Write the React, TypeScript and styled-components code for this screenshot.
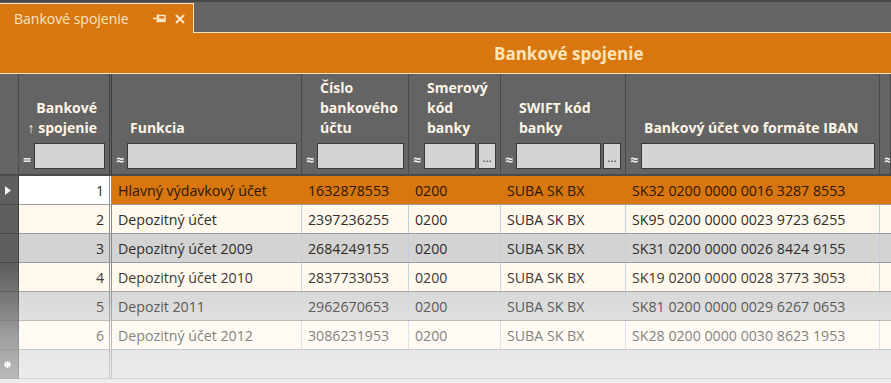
import React from "react";
import styled, { createGlobalStyle } from "styled-components";

const ORANGE = "#D8760F";
const CREAM = "#FBE6C4";
const COLS = "19px 93px 190px 107px 92px 125px 254px 1fr";

const GlobalStyle = createGlobalStyle`
  html, body { margin: 0; padding: 0; background: #656565; }
  body { font-family: "Open Sans", "Noto Sans", sans-serif; }
  * { box-sizing: border-box; }
`;

const Frame = styled.div`
  width: 891px;
  height: 383px;
  overflow: hidden;
  background: #656565;
  display: flex;
  flex-direction: column;
`;

const TabStrip = styled.div`
  height: 33px;
  flex: none;
  border-top: 2px solid #474747;
  border-bottom: 1px solid ${CREAM};
  display: flex;
  align-items: flex-end;
`;

const Tab = styled.div`
  width: 194px;
  height: 30px;
  margin-bottom: -1px;
  background: ${ORANGE};
  border-top: 1px solid ${CREAM};
  border-right: 1px solid ${CREAM};
  display: flex;
  align-items: center;
  padding: 0 8px 0 14px;
  color: ${CREAM};
  font-size: 14px;
`;

const TabTitle = styled.span`
  flex: 1;
  white-space: nowrap;
`;

const TabIcons = styled.span`
  display: flex;
  align-items: center;
  gap: 9px;
`;

const TitleBand = styled.div`
  height: 41px;
  flex: none;
  background: ${ORANGE};
  border-bottom: 1px solid ${CREAM};
  display: flex;
  align-items: center;
  padding-left: 494px;
  color: #FFE4B8;
  font-size: 17px;
  font-weight: 700;
  white-space: nowrap;
`;

const HeaderRow = styled.div`
  display: grid;
  grid-template-columns: ${COLS};
  height: 102px;
  flex: none;
  background: #646464;
  border-bottom: 2px solid #4a4a4a;
`;

const HeaderCell = styled.div<{ $double?: boolean }>`
  display: flex;
  flex-direction: column;
  overflow: hidden;
  border-right: ${(p) => (p.$double ? "3px double #3e3e3e" : "1px solid #4a4a4a")};
`;

const HeaderLabel = styled.div<{ $right?: boolean }>`
  flex: 1;
  display: flex;
  flex-direction: column;
  justify-content: flex-end;
  align-items: ${(p) => (p.$right ? "flex-end" : "flex-start")};
  text-align: ${(p) => (p.$right ? "right" : "left")};
  padding: 4px ${(p) => (p.$right ? "12px" : "4px")} 5px ${(p) => (p.$right ? "4px" : "18px")};
  color: #FFF4E4;
  font-size: 14px;
  font-weight: 700;
  line-height: 20px;
  white-space: nowrap;
`;

const FilterRow = styled.div`
  height: 26px;
  margin-bottom: 5px;
  display: flex;
  align-items: center;
  gap: 2px;
  padding: 0 4px 0 4px;
  flex: none;
`;

const FilterSymbol = styled.span`
  width: 9px;
  flex: none;
  color: #EDEDED;
  font-size: 14px;
  font-weight: 700;
  line-height: 1;
  padding-top: 7px;
`;

const FilterInput = styled.div`
  flex: 1;
  min-width: 20px;
  height: 26px;
  background: #D4D4D4;
  border: 1px solid #3a3a3a;
`;

const DotsButton = styled.div`
  width: 18px;
  height: 26px;
  flex: none;
  margin-left: 0px;
  background: #D4D4D4;
  border: 1px solid #3a3a3a;
  color: #444;
  font-size: 12px;
  display: flex;
  align-items: flex-end;
  justify-content: center;
  padding-bottom: 4px;
  line-height: 1;
`;

const Body = styled.div`
  position: relative;
  flex: 1;
  background: #d6d6d6;
`;

const Fade = styled.div`
  position: absolute;
  inset: 0;
  pointer-events: none;
  background: linear-gradient(
    to bottom,
    rgba(255, 255, 255, 0) 0px,
    rgba(255, 255, 255, 0) 89px,
    rgba(255, 255, 255, 0.2) 130px,
    rgba(255, 255, 255, 0.4) 160px,
    rgba(255, 255, 255, 0.58) 207px
  );
`;

const Row = styled.div<{ $bg: string }>`
  display: grid;
  grid-template-columns: ${COLS};
  height: 29px;
  background: ${(p) => p.$bg};
  border-bottom: 1px solid #9c9c9c;
`;

const RowHead = styled.div`
  background: #5f5f5f;
  border-right: 1px solid #404040;
  border-bottom: 1px solid #4a4a4a;
  margin-bottom: -1px;
  display: flex;
  align-items: center;
  justify-content: center;
  padding-right: 3px;
`;

const Cell = styled.div<{ $right?: boolean; $double?: boolean; $sel?: boolean; $bg?: string }>`
  display: flex;
  align-items: center;
  justify-content: ${(p) => (p.$right ? "flex-end" : "flex-start")};
  padding: 0 ${(p) => (p.$right ? "5px" : "6px")};
  overflow: hidden;
  white-space: nowrap;
  font-size: 14.2px;
  color: ${(p) => (p.$sel ? "#2a1604" : "#2e2e2e")};
  background: ${(p) => p.$bg || "transparent"};
  border-right: ${(p) =>
    p.$double ? "3px double #8a8a8a" : p.$sel ? `1px solid ${ORANGE}` : "1px solid #c6d0dc"};
`;

const PinIcon = () => (
  <svg width="13" height="9" viewBox="0 0 13 9">
    <line x1="0" y1="4.5" x2="4" y2="4.5" stroke={CREAM} strokeWidth="1.6" />
    <line x1="4.5" y1="0.5" x2="4.5" y2="8.5" stroke={CREAM} strokeWidth="1.6" />
    <rect x="5.5" y="1.5" width="6.5" height="6" fill="none" stroke={CREAM} strokeWidth="1.4" />
    <rect x="5.5" y="4.5" width="6.5" height="3" fill={CREAM} />
  </svg>
);

const CloseIcon = () => (
  <svg width="10" height="10" viewBox="0 0 10 10">
    <path d="M1 1 L9 9 M9 1 L1 9" stroke={CREAM} strokeWidth="2.2" />
  </svg>
);

const CurrentMarker = () => (
  <svg width="6" height="9" viewBox="0 0 6 9">
    <polygon points="0,0 6,4.5 0,9" fill="#f4f4f4" />
  </svg>
);

const NewRowMarker = () => (
  <svg width="7" height="7" viewBox="0 0 7 7">
    <path d="M3.5 0 V7 M0 3.5 H7 M1 1 L6 6 M6 1 L1 6" stroke="#fff" strokeWidth="1.3" />
  </svg>
);

type Col = { label: React.ReactNode; right?: boolean; double?: boolean; sym?: string; dots?: boolean };

const columns: Col[] = [
  {
    label: (
      <>
        <span>Bankové</span>
        <span>↑ spojenie</span>
      </>
    ),
    right: true,
    double: true,
    sym: "=",
  },
  { label: "Funkcia", sym: "≈" },
  {
    label: (
      <>
        <span>Číslo</span>
        <span>bankového</span>
        <span>účtu</span>
      </>
    ),
    sym: "≈",
  },
  {
    label: (
      <>
        <span>Smerový</span>
        <span>kód</span>
        <span>banky</span>
      </>
    ),
    sym: "≈",
    dots: true,
  },
  {
    label: (
      <>
        <span>SWIFT kód</span>
        <span>banky</span>
      </>
    ),
    sym: "≈",
    dots: true,
  },
  { label: "Bankový účet vo formáte IBAN", sym: "≈" },
  { label: "", sym: "≈" },
];

const data = [
  ["1", "Hlavný výdavkový účet", "1632878553", "0200", "SUBA SK BX", "SK32 0200 0000 0016 3287 8553"],
  ["2", "Depozitný účet", "2397236255", "0200", "SUBA SK BX", "SK95 0200 0000 0023 9723 6255"],
  ["3", "Depozitný účet 2009", "2684249155", "0200", "SUBA SK BX", "SK31 0200 0000 0026 8424 9155"],
  ["4", "Depozitný účet 2010", "2837733053", "0200", "SUBA SK BX", "SK19 0200 0000 0028 3773 3053"],
  ["5", "Depozit 2011", "2962670653", "0200", "SUBA SK BX", "SK81 0200 0000 0029 6267 0653"],
  ["6", "Depozitný účet 2012", "3086231953", "0200", "SUBA SK BX", "SK28 0200 0000 0030 8623 1953"],
];

const CREAM_ROW = "#FFF8EC";
const GREY_ROW = "#D3D3D3";

export default function App() {
  return (
    <>
      <GlobalStyle />
      <Frame>
        <TabStrip>
          <Tab>
            <TabTitle>Bankové spojenie</TabTitle>
            <TabIcons>
              <PinIcon />
              <CloseIcon />
            </TabIcons>
          </Tab>
        </TabStrip>
        <TitleBand>Bankové spojenie</TitleBand>
        <HeaderRow>
          <HeaderCell />
          {columns.map((c, i) => (
            <HeaderCell key={i} $double={c.double}>
              <HeaderLabel $right={c.right}>{c.label}</HeaderLabel>
              <FilterRow>
                <FilterSymbol>{c.sym}</FilterSymbol>
                <FilterInput />
                {c.dots && <DotsButton>...</DotsButton>}
              </FilterRow>
            </HeaderCell>
          ))}
        </HeaderRow>
        <Body>
          {data.map((r, i) => {
            const sel = i === 0;
            const bg = sel ? ORANGE : i % 2 === 1 ? CREAM_ROW : GREY_ROW;
            return (
              <Row key={i} $bg={bg}>
                <RowHead>{sel && <CurrentMarker />}</RowHead>
                <Cell $right $double $bg={sel ? "#ffffff" : undefined}>
                  {r[0]}
                </Cell>
                <Cell $sel={sel}>{r[1]}</Cell>
                <Cell $sel={sel}>{r[2]}</Cell>
                <Cell $sel={sel}>{r[3]}</Cell>
                <Cell $sel={sel}>{r[4]}</Cell>
                <Cell $sel={sel}>{r[5]}</Cell>
                <Cell $sel={sel} />
              </Row>
            );
          })}
          <Row $bg={GREY_ROW}>
            <RowHead>
              <NewRowMarker />
            </RowHead>
            <Cell $double />
            <Cell />
            <Cell />
            <Cell />
            <Cell />
            <Cell />
            <Cell />
          </Row>
          <Fade />
        </Body>
      </Frame>
    </>
  );
}
